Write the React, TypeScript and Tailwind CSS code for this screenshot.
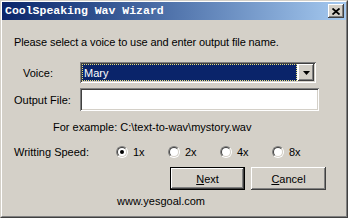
const raised =
  "shadow-[inset_-1px_-1px_#404040,inset_1px_1px_#ffffff,inset_-2px_-2px_#808080,inset_2px_2px_#d4d0c8]";
const sunken =
  "shadow-[inset_1px_1px_#808080,inset_-1px_-1px_#ffffff,inset_2px_2px_#404040,inset_-2px_-2px_#d4d0c8]";

const speeds = ["1x", "2x", "4x", "8x"];

function Radio({ label, checked }: { label: string; checked?: boolean }) {
  return (
    <div className="flex w-[52px] items-center">
      <div className="relative h-[12px] w-[12px] rounded-full border border-t-[#808080] border-l-[#808080] border-r-white border-b-white">
        <div className="flex h-full w-full items-center justify-center rounded-full border border-t-[#404040] border-l-[#404040] border-r-[#d4d0c8] border-b-[#d4d0c8] bg-white">
          {checked && <div className="h-[4px] w-[4px] rounded-full bg-black" />}
        </div>
      </div>
      <span className="ml-[5px]">{label}</span>
    </div>
  );
}

export default function App() {
  return (
    <div
      className="h-[218px] w-[348px] overflow-hidden bg-[#d4d0c8] text-[11px] leading-[14px] text-black"
      style={{ fontFamily: '"Liberation Sans", Arial, sans-serif' }}
    >
      <div className="h-full w-full border border-t-[#d4d0c8] border-l-[#d4d0c8] border-r-[#404040] border-b-[#404040]">
        <div className="flex h-full w-full flex-col border border-t-white border-l-white border-r-[#808080] border-b-[#808080]">
          {/* タイトルバー */}
          <div className="flex h-[18px] items-center bg-gradient-to-r from-[#0a246a] to-[#a6caf0] pr-[2px] pl-[3px]">
            <span
              className="flex-1 text-[11.5px] font-bold text-white"
              style={{ fontFamily: '"Liberation Mono", "Courier New", monospace' }}
            >
              CoolSpeaking Wav Wizard
            </span>
            <div className={`flex h-[14px] w-[16px] items-center justify-center bg-[#d4d0c8] ${raised}`}>
              <svg width="8" height="7" viewBox="0 0 8 7">
                <path d="M0.5 0.5 L7.5 6.5 M7.5 0.5 L0.5 6.5" stroke="black" strokeWidth="1.8" />
              </svg>
            </div>
          </div>

          {/* 説明 */}
          <div className="mt-[15px] pl-[12px] tracking-[-0.1px]">
            Please select a voice to use and enter output file name.
          </div>

          {/* Voice */}
          <div className="mt-[13px] flex h-[21px] items-center">
            <span className="w-[78px] pl-[21px]">Voice:</span>
            <div className={`flex h-[21px] w-[236px] items-center bg-white p-[2px] ${sunken}`}>
              <div className="flex h-full flex-1 items-center bg-[#0a246a] pl-[1px] outline-1 -outline-offset-1 outline-dotted outline-[#e8e07a]">
                <span className="pl-[1px] text-white">Mary</span>
              </div>
              <div className={`ml-[1px] flex h-full w-[16px] items-center justify-center bg-[#d4d0c8] ${raised}`}>
                <svg width="7" height="4" viewBox="0 0 7 4">
                  <path d="M0 0 H7 L3.5 4 Z" fill="black" />
                </svg>
              </div>
            </div>
          </div>

          {/* Output File */}
          <div className="mt-[5px] flex h-[23px] items-center">
            <span className="w-[78px] pl-[12px]">Output File:</span>
            <div className={`h-[23px] w-[239px] bg-white ${sunken}`} />
          </div>

          <div className="mt-[9px] pl-[51px]">For example: C:\text-to-wav\mystory.wav</div>

          {/* Writting Speed */}
          <div className="mt-[11px] flex h-[14px] items-center">
            <span className="w-[114px] pl-[12px]">Writting Speed:</span>
            {speeds.map((s, i) => (
              <Radio key={s} label={s} checked={i === 0} />
            ))}
          </div>

          {/* ボタン */}
          <div className="mt-[8px] flex h-[23px] pl-[168px]">
            <button className="h-[23px] w-[75px] border border-black bg-[#d4d0c8] p-0">
              <div className={`flex h-full w-full items-center justify-center ${raised}`}>
                <span>
                  <span className="underline">N</span>ext
                </span>
              </div>
            </button>
            <button className={`ml-[6px] flex h-[23px] w-[75px] items-center justify-center bg-[#d4d0c8] ${raised}`}>
              <span>
                <span className="underline">C</span>ancel
              </span>
            </button>
          </div>

          <div className="mt-[4px] pl-[115px]">www.yesgoal.com</div>
        </div>
      </div>
    </div>
  );
}
